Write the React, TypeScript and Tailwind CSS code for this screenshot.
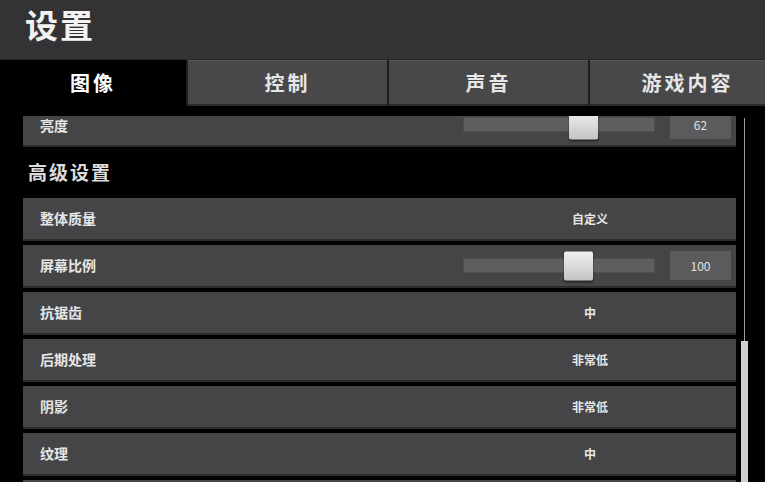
const font = { fontFamily: '"Noto Sans CJK SC", "Noto Sans", sans-serif' };

type Row = { label: string; value?: string; slider?: { left: number; value: string } };

const rows: Row[] = [
  { label: '整体质量', value: '自定义' },
  { label: '屏幕比例', slider: { left: 101, value: '100' } },
  { label: '抗锯齿', value: '中' },
  { label: '后期处理', value: '非常低' },
  { label: '阴影', value: '非常低' },
  { label: '纹理', value: '中' },
  { label: '' },
];

const tabs = ['图像', '控制', '声音', '游戏内容'];

function Slider({ left, value }: { left: number; value: string }) {
  return (
    <div className="flex items-center pl-[19px] pr-[5px] w-full">
      <div className="relative h-[15px] w-[192px] bg-[#5e5e60] border border-[#505052]">
        <div
          className={`absolute top-1/2 -translate-y-1/2 h-[29px] w-[29px] rounded-[2px] bg-gradient-to-b from-[#f0f0f0] to-[#c4c4c4] shadow-[0_1px_2px_rgba(0,0,0,0.6)] ${left === 106 ? 'left-[105px]' : 'left-[100px]'}`}
        />
      </div>
      <div className="ml-[15px] h-[29px] w-[61px] bg-[#5b5b5d] flex items-center justify-center text-[12px] text-[#e2e2e2]">
        {value}
      </div>
    </div>
  );
}

function SettingRow({ row }: { row: Row }) {
  return (
    <div className="h-[43px] shrink-0 bg-[#454547] border-b-2 border-[#2c2c2e] flex items-center">
      <div className="flex-1 pl-[17px] text-[14px] font-bold text-[#e6e6e6]">{row.label}</div>
      <div className="w-[292px] flex items-center justify-center">
        {row.slider ? (
          <Slider left={row.slider.left} value={row.slider.value} />
        ) : (
          <span className="text-[12px] font-bold text-[#e6e6e6]">{row.value}</span>
        )}
      </div>
    </div>
  );
}

export default function App() {
  return (
    <div className="w-[765px] h-[482px] bg-black overflow-hidden flex flex-col" style={font}>
      <header className="h-[60px] shrink-0 bg-[#333335] border-b border-[#262628] pl-[25px]">
        <h1 className="text-[33px] font-bold text-[#f2f2f2] tracking-[2px] leading-[48px]">设置</h1>
      </header>
      <nav className="h-[46px] shrink-0 flex bg-[#1e1e20]">
        {tabs.map((t, i) => (
          <div
            key={t}
            className={
              i === 0
                ? 'w-[186px] bg-black flex items-center justify-center text-[20px] font-bold text-white tracking-[3px]'
                : (i === 3 ? 'flex-1 ml-[2px] pl-[20px] ' : 'w-[199px] ml-[2px] ') +
                  'bg-[#48484a] border-t border-[#5a5a5c] border-b-2 border-b-[#2a2a2c] flex items-center justify-center text-[20px] font-bold text-[#e6e6e6] tracking-[3px]'
            }
          >
            {t}
          </div>
        ))}
      </nav>
      <div className="mt-[10px] flex-1 min-h-0 flex overflow-hidden">
        <div className="w-[736px] pl-[23px] flex flex-col -mt-[12px]">
          <div className="h-[43px] shrink-0 bg-[#454547] border-b-2 border-[#2c2c2e] flex items-center">
            <div className="flex-1 pl-[17px] pt-[2px] text-[14px] font-bold text-[#e6e6e6]">亮度</div>
            <div className="w-[292px] flex items-center">
              <Slider left={106} value="62" />
            </div>
          </div>
          <div className="h-[51px] shrink-0 flex items-center pl-[5px] text-[19px] font-bold text-[#dcdcdc] tracking-[2px]">
            高级设置
          </div>
          <div className="flex flex-col gap-[4px]">
            {rows.map((r, i) => (
              <SettingRow key={i} row={r} />
            ))}
          </div>
        </div>
        <div className="ml-[5px] w-[7px] flex flex-col items-center pt-[2px]">
          <div className="w-px flex-1 bg-[#9a9a9a]" />
          <div className="w-[7px] h-[141px] bg-[#cfcfcf]" />
        </div>
      </div>
    </div>
  );
}
